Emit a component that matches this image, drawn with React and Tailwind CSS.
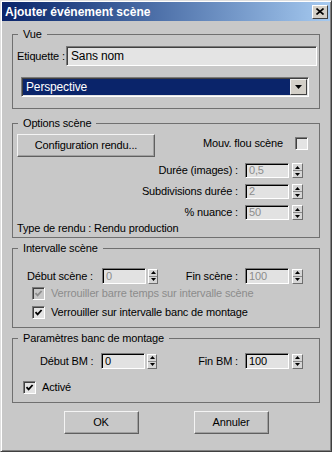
import React from 'react';

const Spinner = ({ narrow }) => (
    <div className={`${narrow ? 'w-[10px]' : 'w-[11px]'} h-[15px] flex flex-col border border-t-white border-l-white border-r-[#6e6e6e] border-b-[#6e6e6e] bg-[#d6d6d6]`}>
        <div className="flex-1 flex items-center justify-center border-b border-b-[#8a8a8a]">
            <svg width="5" height="3" viewBox="0 0 5 3"><path d="M2.5 0 L5 3 L0 3 Z" fill="#000" /></svg>
        </div>
        <div className="flex-1 flex items-center justify-center">
            <svg width="5" height="3" viewBox="0 0 5 3"><path d="M0 0 L5 0 L2.5 3 Z" fill="#000" /></svg>
        </div>
    </div>
);

const NumField = ({ value, disabled, tall }) => (
    <div className={`w-[44px] ${tall ? 'h-[16px]' : 'h-[15px]'} flex items-center pl-[3px] bg-[#e2e2e2] border border-t-[#7a7a7a] border-l-[#7a7a7a] border-r-white border-b-white shadow-[inset_1px_1px_0_#000] ${disabled ? 'text-[#8c8c8c]' : 'text-black'}`}>
        {value}
    </div>
);

const RightSpin = ({ label, value, disabled, tall }) => (
    <div className="ml-auto mr-[14px] flex items-center">
        <span className="mr-[7px] whitespace-nowrap">{label}</span>
        <NumField value={value} disabled={disabled} tall={tall} />
        <div className="ml-[3px]"><Spinner /></div>
    </div>
);

const Check = ({ checked, disabled }) => (
    <div className={`w-[13px] h-[13px] shrink-0 flex items-center justify-center border border-t-[#7a7a7a] border-l-[#7a7a7a] border-r-white border-b-white shadow-[inset_1px_1px_0_#404040] ${disabled ? 'bg-[#c8c8c8]' : 'bg-[#e4e4e4]'}`}>
        {checked && (
            <svg width="9" height="9" viewBox="0 0 9 9">
                <path d="M1.5 4.2 L3.6 6.4 L7.6 2" fill="none" stroke={disabled ? '#8c8c8c' : '#000'} strokeWidth="1.8" />
            </svg>
        )}
    </div>
);

const Button = ({ children, className }) => (
    <div className={`h-[23px] flex items-center justify-center bg-[#c8c8c8] border border-t-[#f4f4f4] border-l-[#f4f4f4] border-r-[#606060] border-b-[#606060] shadow-[inset_-1px_-1px_0_#a0a0a0] ${className}`}>
        {children}
    </div>
);

const Group = ({ title, className, children }) => (
    <fieldset className={`border border-[#707070] pl-[4px] pr-[2px] ${className}`}>
        <legend className="ml-[1px] px-[5px] leading-[14px]">{title}</legend>
        {children}
    </fieldset>
);

export default function App() {
    return (
        <div className="w-[332px] h-[452px] bg-[#c8c8c8] border border-t-[#dfdfdf] border-l-[#dfdfdf] border-r-[#404040] border-b-[#404040] p-[1px] shadow-[inset_1px_1px_0_#fff,inset_-1px_-1px_0_#808080] font-['Liberation_Sans',Arial,sans-serif] text-[11px] tracking-[-0.15px] text-black leading-none select-none whitespace-nowrap">
            <div className="h-[19px] flex items-center justify-between pl-[3px] pr-[2px] bg-linear-to-r from-[#0a246a] to-[#a6caf0]">
                <span className="text-white font-bold text-[12px] tracking-normal">Ajouter événement scène</span>
                <div className="w-[16px] h-[14px] flex items-center justify-center bg-[#d4d0c8] border border-t-white border-l-white border-r-[#404040] border-b-[#404040]">
                    <svg width="8" height="7" viewBox="0 0 8 7">
                        <path d="M0.5 0.5 L7.5 6.5 M7.5 0.5 L0.5 6.5" stroke="#000" strokeWidth="1.6" />
                    </svg>
                </div>
            </div>

            <div className="px-[10px]">
                <Group title="Vue" className="mt-[6px] pb-[11px]">
                    <div className="pt-[5px] flex items-center">
                        <span className="w-[49px] shrink-0">Etiquette :</span>
                        <div className="flex-1 h-[20px] flex items-center pl-[4px] text-[12px] bg-[#e4e4e4] border border-t-[#7a7a7a] border-l-[#7a7a7a] border-r-white border-b-white shadow-[inset_1px_1px_0_#404040]">
                            Sans nom
                        </div>
                    </div>
                    <div className="mt-[11px] ml-[4px] w-[288px] h-[20px] flex border border-t-[#7a7a7a] border-l-[#7a7a7a] border-r-white border-b-white shadow-[inset_1px_1px_0_#404040] p-[1px] bg-[#e4e4e4]">
                        <div className="flex-1 flex items-center pl-[3px] bg-[#0a246a] text-white text-[12px]">Perspective</div>
                        <div className="w-[17px] flex items-center justify-center bg-[#d4d0c8] border border-t-[#f0f0f0] border-l-[#f0f0f0] border-r-[#404040] border-b-[#404040]">
                            <svg width="7" height="4" viewBox="0 0 7 4"><path d="M0 0 L7 0 L3.5 4 Z" fill="#000" /></svg>
                        </div>
                    </div>
                </Group>

                <Group title="Options scène" className="mt-[7px] pb-[2px]">
                    <div className="pt-[4px] flex items-start">
                        <Button className="w-[138px]">Configuration rendu...</Button>
                        <div className="ml-auto mr-[9px] mt-[3px] flex items-center">
                            <span className="mr-[12px]">Mouv. flou scène</span>
                            <Check />
                        </div>
                    </div>
                    <div className="mt-[6px] flex"><RightSpin label="Durée (images) :" value="0,5" disabled /></div>
                    <div className="mt-[6px] flex"><RightSpin label="Subdivisions durée :" value="2" disabled /></div>
                    <div className="mt-[6px] flex"><RightSpin label="% nuance :" value="50" disabled /></div>
                    <div className="mt-[1px] h-[14px] flex items-center">Type de rendu : Rendu production</div>
                </Group>

                <Group title="Intervalle scène" className="mt-[3px] pb-[8px]">
                    <div className="pt-[13px] flex items-center">
                        <span className="w-[85px] shrink-0 pl-[10px]">Début scène :</span>
                        <NumField value="0" disabled tall />
                        <div className="ml-[2px]"><Spinner narrow /></div>
                        <RightSpin label="Fin scène :" value="100" disabled tall />
                    </div>
                    <div className="mt-[2px] h-[14px] ml-[15px] flex items-center text-[#8c8c8c]">
                        <Check checked disabled />
                        <span className="ml-[6px]">Verrouiller barre temps sur intervalle scène</span>
                    </div>
                    <div className="mt-[5px] h-[14px] ml-[15px] flex items-center">
                        <Check checked />
                        <span className="ml-[6px]">Verrouiller sur intervalle banc de montage</span>
                    </div>
                </Group>

                <Group title="Paramètres banc de montage" className="mt-[3px] pb-[8px]">
                    <div className="pt-[8px] flex items-center">
                        <span className="w-[84px] shrink-0 pl-[23px]">Début BM :</span>
                        <NumField value="0" tall />
                        <div className="ml-[2px]"><Spinner narrow /></div>
                        <RightSpin label="Fin BM :" value="100" tall />
                    </div>
                    <div className="mt-[11px] h-[14px] ml-[6px] flex items-center">
                        <Check checked />
                        <span className="ml-[6px]">Activé</span>
                    </div>
                </Group>

                <div className="mt-[8px] flex justify-center gap-[55px]">
                    <Button className="w-[75px]">OK</Button>
                    <Button className="w-[75px]">Annuler</Button>
                </div>
            </div>
        </div>
    );
}
